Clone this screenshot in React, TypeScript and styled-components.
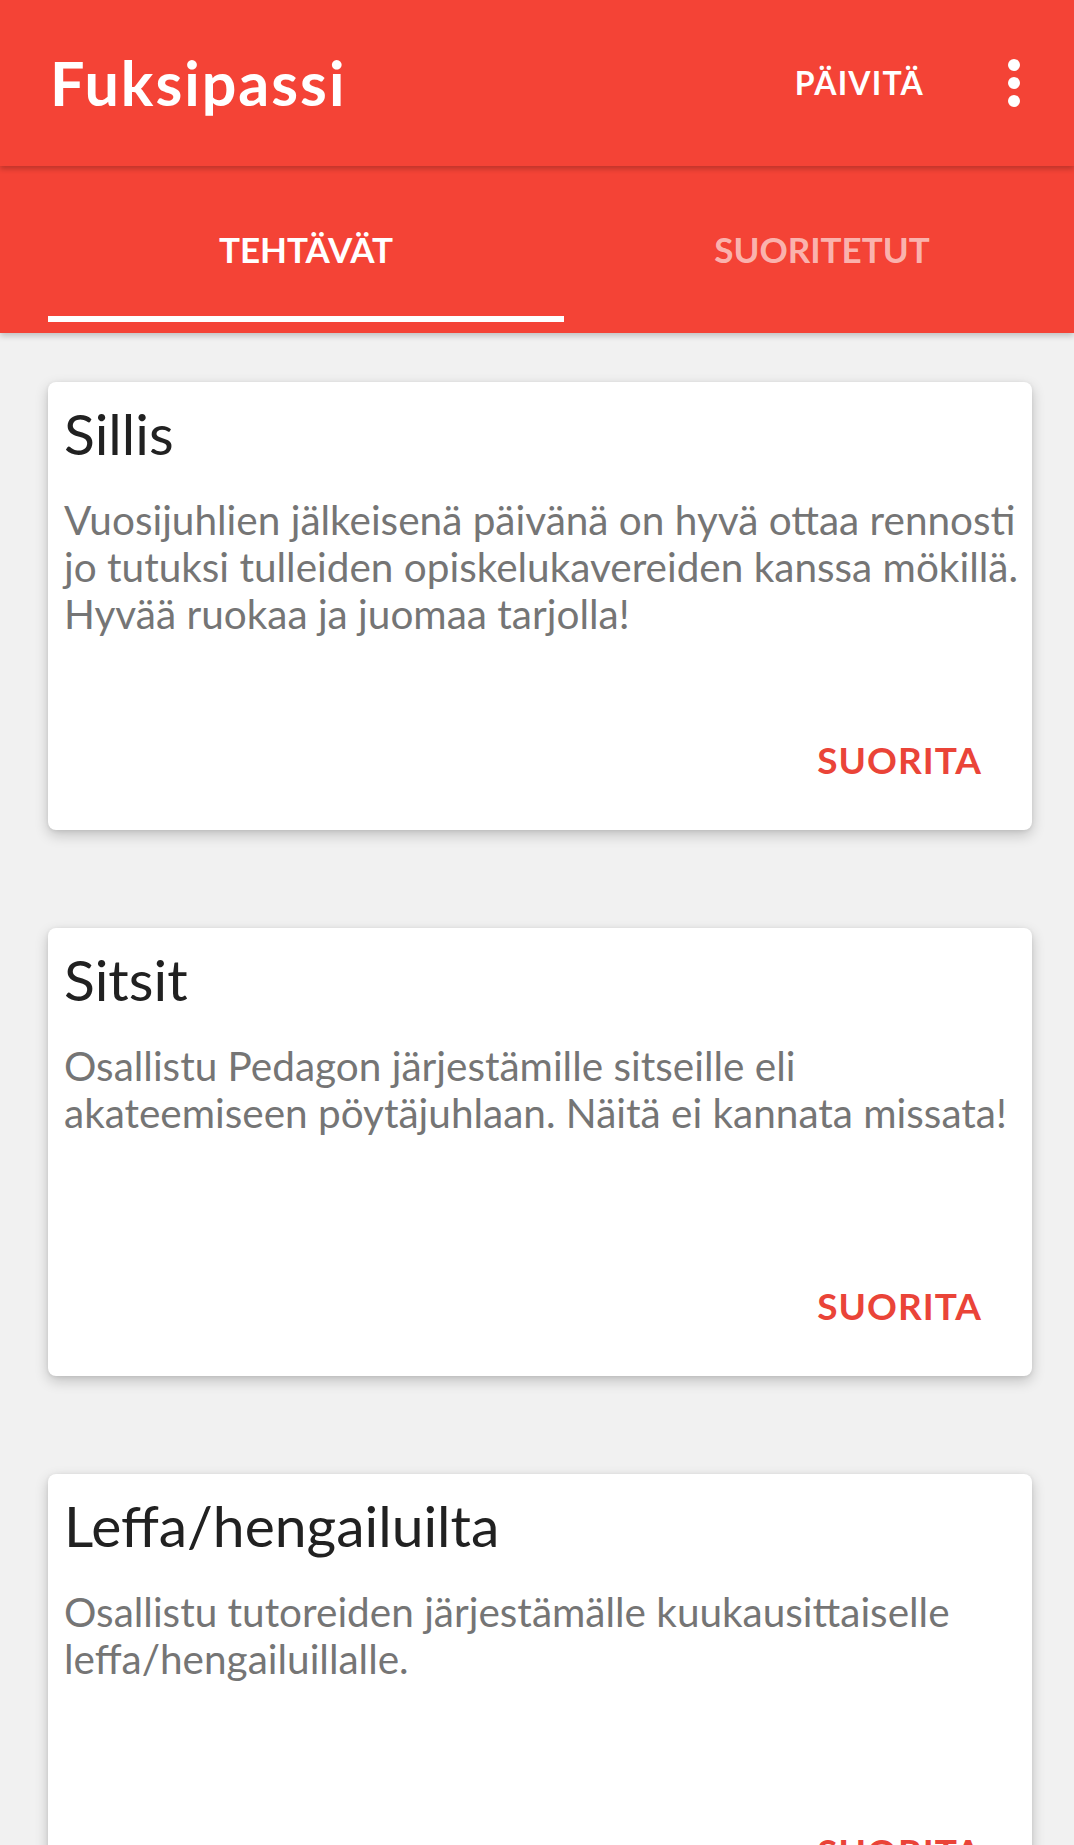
import React from "react";
import styled, { createGlobalStyle } from "styled-components";

const Global = createGlobalStyle`
  html, body { margin: 0; padding: 0; background: #f1f1f1; }
  body { font-family: Lato, "Open Sans", sans-serif; overflow: hidden; }
  * { box-sizing: border-box; }
`;

const Page = styled.div`
  width: 1074px;
  min-height: 1845px;
  background: #f1f1f1;
`;

const AppBar = styled.header`
  position: relative;
  z-index: 3;
  height: 166px;
  background: #f44336;
  display: flex;
  align-items: center;
  padding: 0 54px 0 50px;
  box-shadow: 0 3px 5px rgba(0, 0, 0, 0.22);
`;

const Title = styled.h1`
  flex: 1;
  margin: 0;
  color: #fff;
  font-family: Lato, sans-serif;
  font-weight: 700;
  font-size: 61px;
  letter-spacing: 2px;
  line-height: 70px;
`;

const ActionButton = styled.button`
  border: 0;
  background: none;
  padding: 0;
  color: #fff;
  font-family: Lato, sans-serif;
  font-weight: 700;
  font-size: 32px;
  letter-spacing: 1.2px;
  line-height: 40px;
  margin-right: 84px;
`;

const Overflow = styled.div`
  display: flex;
  flex-direction: column;
  gap: 6px;
`;

const Dot = styled.span`
  width: 12px;
  height: 12px;
  border-radius: 50%;
  background: #fff;
`;

const TabBar = styled.nav`
  position: relative;
  z-index: 2;
  height: 167px;
  background: #f44336;
  display: flex;
  padding-left: 48px;
  overflow: hidden;
  box-shadow: 0 3px 6px rgba(0, 0, 0, 0.2);
`;

const Tab = styled.div<{ $active?: boolean }>`
  position: relative;
  flex: 0 0 516px;
  display: flex;
  align-items: center;
  justify-content: center;
  color: ${(p) => (p.$active ? "#fff" : "rgba(255,255,255,0.62)")};
  font-family: Lato, sans-serif;
  font-weight: 700;
  font-size: 35px;
  padding-bottom: 2px;
`;

const Indicator = styled.span`
  position: absolute;
  left: 0;
  right: 0;
  bottom: 11px;
  height: 6px;
  background: #fff;
`;

const List = styled.main`
  display: flex;
  flex-direction: column;
  gap: 98px;
  padding: 49px 42px 0 48px;
`;

const Card = styled.section`
  min-height: 448px;
  background: #fff;
  border-radius: 8px;
  box-shadow: 0 5px 14px rgba(0, 0, 0, 0.2), 0 1px 4px rgba(0, 0, 0, 0.08);
  display: flex;
  flex-direction: column;
  padding: 17px 4px 48px 16px;
`;

const CardTitle = styled.h2`
  margin: 0;
  color: #212121;
  font-family: Lato, sans-serif;
  font-weight: 400;
  font-size: 57px;
  line-height: 68px;
`;

const CardText = styled.p`
  margin: 29px 0 0;
  color: #757575;
  font-family: Lato, sans-serif;
  font-weight: 400;
  font-size: 40.5px;
  line-height: 47px;
`;

const Actions = styled.div`
  margin-top: auto;
  display: flex;
  justify-content: flex-end;
  padding-right: 46px;
`;

const TextButton = styled.button`
  border: 0;
  background: none;
  padding: 0;
  color: #ea4438;
  font-family: Lato, sans-serif;
  font-weight: 700;
  font-size: 37px;
  letter-spacing: 1px;
  line-height: 44px;
`;

const tasks = [
  {
    title: "Sillis",
    text: "Vuosijuhlien jälkeisenä päivänä on hyvä ottaa rennosti jo tutuksi tulleiden opiskelukavereiden kanssa mökillä. Hyvää ruokaa ja juomaa tarjolla!",
  },
  {
    title: "Sitsit",
    text: "Osallistu Pedagon järjestämille sitseille eli akateemiseen pöytäjuhlaan. Näitä ei kannata missata!",
  },
  {
    title: "Leffa/hengailuilta",
    text: "Osallistu tutoreiden järjestämälle kuukausittaiselle leffa/hengailuillalle.",
  },
];

export default function App() {
  return (
    <Page>
      <Global />
      <AppBar>
        <Title>Fuksipassi</Title>
        <ActionButton>PÄIVITÄ</ActionButton>
        <Overflow>
          <Dot />
          <Dot />
          <Dot />
        </Overflow>
      </AppBar>
      <TabBar>
        <Tab $active>
          TEHTÄVÄT
          <Indicator />
        </Tab>
        <Tab>SUORITETUT</Tab>
      </TabBar>
      <List>
        {tasks.map((t) => (
          <Card key={t.title}>
            <CardTitle>{t.title}</CardTitle>
            <CardText>{t.text}</CardText>
            <Actions>
              <TextButton>SUORITA</TextButton>
            </Actions>
          </Card>
        ))}
      </List>
    </Page>
  );
}
